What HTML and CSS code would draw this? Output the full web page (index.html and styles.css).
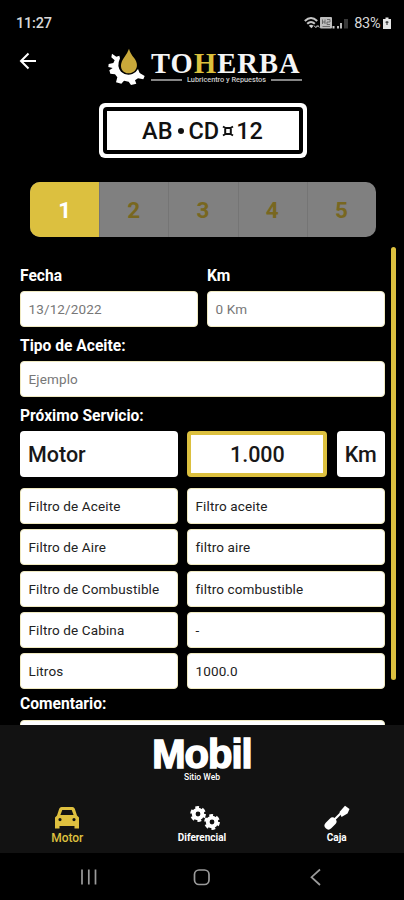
FILE: index.html
```
<!DOCTYPE html>
<html lang="es">
<head>
<meta charset="utf-8">
<title>Toherba</title>
<link rel="stylesheet" href="styles.css">
</head>
<body>
<div class="phone">
  <div class="status">
    <span class="clock">11:27</span>
    <svg class="signals" viewBox="0 0 47 14" width="47" height="14">
      <g fill="none" stroke="#c4c4c4" stroke-width="2"><path d="M.8 5Q7 -1 13.200 5"/><path d="M3.200 7.800Q7 4 10.800 7.800"/></g>
      <path d="M4.800 9.800Q7 7.600 9.500 9.800L7.500 12.300z" fill="#ccc"/>
      <path d="M10 9.500l1.500 2 1.500-2M12.500 11.500l1.500-2 1.300 2" fill="none" stroke="#bbb"/>
      <rect x="16" y="1" width="12" height="11.500" rx="1" fill="#bdbdbd"/>
      <path d="M18.500 3.500v4.500M21 3.500v4.500M18.500 6H21M23 3.500h3V6h-3v2.500h3M18.500 10.500H26" fill="none" stroke="#555" stroke-width=".8"/>
      <rect x="28.500" y="10" width="2" height="2.500" fill="#ccc"/><rect x="33" y="10" width="2" height="2.500" fill="#bbb"/><rect x="36" y="7" width="2" height="5.500" fill="#bbb"/><rect x="40" y="3" width="4" height="9.500" fill="#393939"/>
    </svg>
    <span class="percent">83%</span>
    <svg class="battery" viewBox="0 0 8 12" width="8" height="12"><path d="M2.500.500h3V2H8v10H0V2h2.500z" fill="#e4e4e4"/><path d="M4 4v4M2.500 5.200h3" stroke="#222"/></svg>
  </div>

  <header class="header">
    <svg class="back" viewBox="0 0 18 18" width="18" height="18"><path d="M17 9H2M9.500 1.500L2 9l7.500 7.500" fill="none" stroke="#fff" stroke-width="2"/></svg>
    <svg class="gear" viewBox="320 140 120 120" width="40" height="40">
      <path fill="#fff" d="M335 160L348 169L357 166L359 174Q348 198 362 214Q376 227 396 221Q407 217 413 206L418 218L433 227L429 237L413 234L404 240L408 250L392 254L385 244L371 241L363 250L347 246L351 231L344 222L330 220L327 210L337 203L324 200L325 191L339 188L343 180L333 171Z"/>
      <path fill="#c8a83a" d="M386 145Q389 158 402 174C420 199 404 219 386 219C367 219 353 200 369 175Q382 158 386 145Z"/>
    </svg>
    <div class="brand">
      <div class="brand-name">TO<span>H</span>ERBA</div>
      <div class="brand-sub"><i></i><b>Lubricentro y Repuestos</b><i></i></div>
    </div>
  </header>

  <div class="plate"><div class="plate-in">AB<i class="dot"></i>CD<svg viewBox="0 0 12 12" width="12" height="12"><path d="M1 1.500L3.500 3M11 1.500L8.500 3M1 10.500L3.500 9M11 10.500L8.500 9M3.200 3h5.600v6H3.200z" fill="none" stroke="#111" stroke-width="2"/></svg>12</div></div>

  <div class="steps"><div class="on">1</div><div>2</div><div>3</div><div>4</div><div>5</div></div>

  <main class="scroll">
    <div class="form">
      <div class="two">
        <div><label>Fecha</label><div class="field hint">13/12/2022</div></div>
        <div><label>Km</label><div class="field hint">0 Km</div></div>
      </div>
      <label>Tipo de Aceite:</label>
      <div class="field hint">Ejemplo</div>
      <label>Próximo Servicio:</label>
      <div class="service"><div class="big">Motor</div><div class="big value">1.000</div><div class="big unit">Km</div></div>
      <div class="filters">
        <div class="field">Filtro de Aceite</div><div class="field">Filtro aceite</div>
        <div class="field">Filtro de Aire</div><div class="field">filtro aire</div>
        <div class="field">Filtro de Combustible</div><div class="field">filtro combustible</div>
        <div class="field">Filtro de Cabina</div><div class="field">-</div>
        <div class="field">Litros</div><div class="field">1000.0</div>
      </div>
      <label class="comment">Comentario:</label>
      <div class="field"></div>
    </div>
    <div class="bar"></div>
  </main>

  <footer class="footer">
    <div class="mobil">Mobil</div>
    <div class="site">Sitio Web</div>
    <nav class="tabs">
      <div class="tab active">
        <svg viewBox="0 0 26 24" width="26" height="24"><path fill="#dec03f" fill-rule="evenodd" d="M7.500 1h11q1.600 0 2.300 1.800l2.200 6.700 2 2V22.500h-4.500V20h-15v2.500H1V11.500l2-2 2.200-6.700Q5.900 1 7.500 1zM8.300 4L6.400 9h13.200l-1.900-5zM6 12a1.500 1.500 0 100 3.200A1.500 1.500 0 006 12zm14 0a1.500 1.500 0 100 3.200 1.500 1.500 0 000-3.200z"/></svg>
        <span>Motor</span>
      </div>
      <div class="tab">
        <svg class="gears" viewBox="0 0 32 26" width="32" height="26"><g fill="none" stroke="#fff"><circle cx="9" cy="9" r="4.300" stroke-width="3.800"/><circle cx="9" cy="9" r="6.500" stroke-width="2.800" stroke-dasharray="3.700 3.107"/><circle cx="23" cy="17" r="4.300" stroke-width="3.800"/><circle cx="23" cy="17" r="6.500" stroke-width="2.800" stroke-dasharray="3.700 3.107"/></g></svg>
        <span>Diferencial</span>
      </div>
      <div class="tab">
        <svg viewBox="0 0 26 26" width="26" height="26"><path d="M4.500 20.500L8.500 16.500" stroke="#fff" stroke-width="7.800" stroke-linecap="round"/><path d="M10 15L18 7" stroke="#fff" stroke-width="2.200"/><path d="M15.500 7L21 .8 25.500 4 23.500 8.500 17.500 12z" fill="#fff"/></svg>
        <span>Caja</span>
      </div>
    </nav>
  </footer>

  <div class="sysnav">
    <svg viewBox="0 0 404 47" width="404" height="47" fill="none" stroke="#9b9b9b"><path d="M82 16.500v15M88.800 16.500v15M95.500 16.500v15" stroke-width="1.700"/><rect x="194.500" y="17" width="14.500" height="14.500" rx="4.500" stroke-width="1.700"/><path d="M320 16.500l-8.500 7.700 8.500 7.800" stroke-width="1.700"/></svg>
  </div>
</div>
</body>
</html>
```
FILE: styles.css
```
* { box-sizing: border-box; }
body { margin: 0; background: #000; }
.phone { width: 404px; height: 900px; display: flex; flex-direction: column; background: #000; font-family: Roboto, sans-serif; overflow: hidden; }
svg { display: block; flex: none; }

.status { height: 46px; display: flex; align-items: center; padding: 0 13.500px 0 16px; color: #d8d8d8; font-size: 14px; }
.clock { font-size: 14.5px; font-weight: 500; letter-spacing: -.2px; flex: 1; }
.signals { margin-right: 1px; }
.percent { margin: 0 2px; font-size: 14.5px; letter-spacing: -.2px; }

.header { height: 44px; display: flex; padding-left: 19px; }
.back { margin-top: 6px; }
.gear { margin: 1px 0 0 70px; }
.brand { margin: 0 0 0 4px; width: 151px; }
.brand-name { height: 33px; line-height: 35px; font-family: "Liberation Serif", serif; font-weight: 700; font-size: 28.5px; letter-spacing: 1.1px; color: #f5f5f5; white-space: nowrap; }
.brand-sub { display: flex; align-items: center; justify-content: space-between; height: 2px; }
.brand-name span { color: #dcc03c; }
.brand-sub b { font-size: 7.4px; line-height: 8px; letter-spacing: -.05px; font-weight: 500; color: #ccc; white-space: nowrap; }
.brand-sub i { width: 31px; height: 2px; background: #858585; }

.plate { width: 208px; height: 55px; margin: 13px 0 0 98.500px; padding: 4px; border-radius: 6px; background: #fff; }
.plate-in { height: 100%; border: 4px solid #000; border-radius: 4px; display: flex; align-items: center; justify-content: center; font-size: 23.5px; font-weight: 500; color: #111; }
.dot { width: 6px; height: 6px; border-radius: 50%; background: #111; margin: 0 5px; }
.plate-in svg { margin: 0 2.500px; }

.steps { width: 346px; height: 55px; margin: 24px 0 0 30px; display: grid; grid-template-columns: repeat(5, 1fr); border-radius: 10px; overflow: hidden; background: #808080; }
.steps div { display: flex; align-items: center; justify-content: center; font-size: 22.5px; font-weight: 700; color: #786720; box-shadow: inset 1px 0 #757575; }
.steps .on { background: #dcc03f; color: #fff; box-shadow: none; }

.scroll { height: 478px; margin-top: 10px; display: flex; overflow: hidden; }
.form { width: 365px; margin: 19px 0 0 20px; }
label { display: block; height: 25px; line-height: 21px; font-size: 15.6px; font-weight: 700; color: #fff; }
.field { height: 36px; border: 1px solid #efe9c0; border-radius: 4px; background: #fff; padding-left: 7.500px; display: flex; align-items: center; font-size: 13.5px; letter-spacing: .13px; color: #222; white-space: nowrap; }
.hint { color: #777; }
.two { display: grid; grid-template-columns: 178px 178px; gap: 9px; }
.form > label { height: 34px; padding-top: 9px; }
.service { display: grid; grid-template-columns: 158px 140px 48px; column-gap: 9.400px; height: 46px; }
.big { display: flex; align-items: center; background: #fff; border-radius: 4px; padding-left: 8px; font-size: 21.500px; font-weight: 500; color: #181818; }
.value { border: 4px solid #dcc03f; justify-content: center; padding: 0; }
.unit { justify-content: center; padding: 0; }
.filters { display: grid; grid-template-columns: 158px 198px; column-gap: 9px; row-gap: 5.350px; margin-top: 11px; }
.form > .comment { height: 31px; padding-top: 5px; }
.bar { width: 5px; height: 433px; margin-left: 6px; border-radius: 3px; background: #dcc03f; }

.footer { height: 128px; background: #121212; display: flex; flex-direction: column; align-items: center; color: #fff; }
.mobil { margin-top: 10px; height: 37px; line-height: 38px; font-family: "Liberation Sans", sans-serif; font-weight: 700; font-size: 40px; letter-spacing: -1px; -webkit-text-stroke: 1.500px #fff; }
.site { height: 11px; line-height: 11px; font-size: 8.5px; font-weight: 500; }
.tabs { width: 404px; display: flex; justify-content: space-between; padding: 22px 0 0; }
.tab { width: 134.500px; height: 44px; display: flex; flex-direction: column; align-items: center; font-size: 10px; font-weight: 700; }
.tab svg { height: 26px; }
.tab .gears { margin-left: 5px; }
.tab span { line-height: 14px; }
.active { color: #dec03f; font-size: 12px; font-weight: 500; }
.sysnav { height: 47px; }
```
